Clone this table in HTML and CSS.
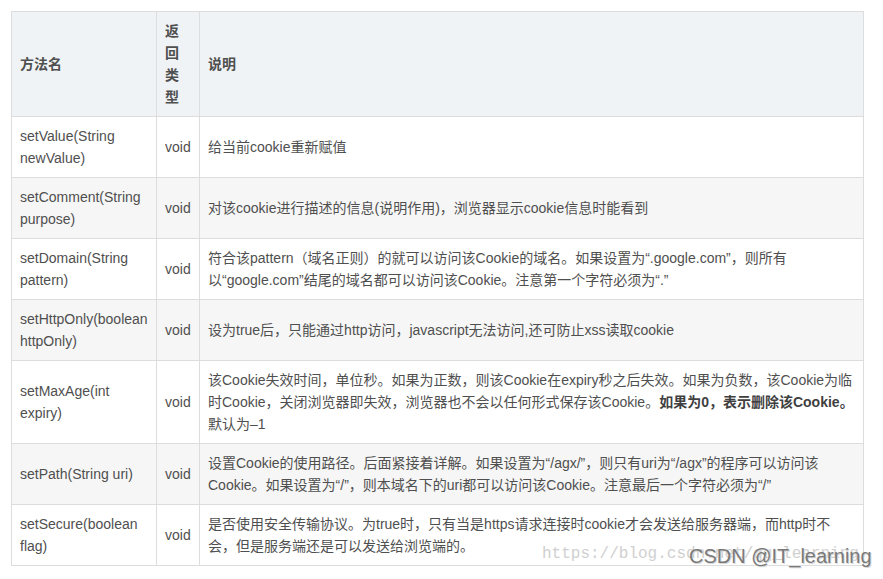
FILE: index.html
```html
<!DOCTYPE html>
<html lang="zh">
<head>
<meta charset="utf-8">
<title>Cookie 方法</title>
<link rel="stylesheet" href="styles.css">
</head>
<body>
<div class="page">
  <table class="api">
    <colgroup>
      <col class="c-name">
      <col class="c-type">
      <col class="c-desc">
    </colgroup>
    <thead>
      <tr><th>方法名</th><th>返回类型</th><th>说明</th></tr>
    </thead>
    <tbody>
      <tr><td>setValue(String newValue)</td><td>void</td><td>给当前cookie重新赋值</td></tr>
      <tr><td>setComment(String purpose)</td><td>void</td><td>对该cookie进行描述的信息(说明作用)，浏览器显示cookie信息时能看到</td></tr>
      <tr><td>setDomain(String pattern)</td><td>void</td><td>符合该pattern（域名正则）的就可以访问该Cookie的域名。如果设置为“.google.com”，则所有<span class="nb">以“google.com”结尾</span>的域名都可以访问该Cookie。注意第一个字符必须为“.”</td></tr>
      <tr><td>setHttpOnly(boolean httpOnly)</td><td>void</td><td>设为true后，只能通过http访问，javascript无法访问,还可防止xss读取cookie</td></tr>
      <tr><td>setMaxAge(int expiry)</td><td>void</td><td>该Cookie失效时间，单位秒。如果为正数，则该Cookie在expiry秒之后失效。如果为负数，该Cookie为临时Cookie，关闭浏览器即失效，浏览器也不会以任何形式保存该Cookie。<strong>如果为0，表示删除该Cookie。</strong>默认为–1</td></tr>
      <tr><td>setPath(String uri)</td><td>void</td><td>设置Cookie的使用路径。后面紧接着详解。如果设置为“/agx/”，则只有uri为“/agx”的程序可以访问该Cookie。如果设置为“/”，则本域名下的uri都可以访问该Cookie。注意最后一个字符必须为“/”</td></tr>
      <tr><td>setSecure(boolean flag)</td><td>void</td><td>是否使用安全传输协议。为true时，只有当是https请求连接时cookie才会发送给服务器端，而http时不会，但是服务端还是可以发送给浏览端的。</td></tr>
    </tbody>
  </table>
  <div class="wm-url">https://blog.csdn.net/qq_learning</div>
  <div class="wm-csdn">CSDN @IT_learning</div>
</div>
</body>
</html>
```

FILE: styles.css
```css
html, body {
  margin: 0;
  padding: 0;
  background: #ffffff;
}

.page {
  position: relative;
  padding: 11px 0 0 11px;
  width: 872px;
  height: 568px;
  overflow: hidden;
  font-family: "Liberation Sans", Arial, "Noto Sans CJK SC", sans-serif;
  font-size: 14px;
  color: #4f4f4f;
}

.api {
  border-collapse: collapse;
  table-layout: fixed;
  width: 852px;
}

.c-name { width: 145px; }
.c-type { width: 43px; }
.c-desc { width: 664px; }

.api th,
.api td {
  border: 1px solid #dddddd;
  padding: 8px;
  line-height: 22px;
  text-align: left;
  vertical-align: middle;
  word-wrap: break-word;
}

.api th {
  background: #eff3f5;
  font-weight: bold;
  color: #4f4f4f;
}

.api tbody tr:nth-child(even) td {
  background: #f6f6f6;
}

.api strong {
  font-weight: bold;
  color: #3f3f3f;
}

.nb {
  white-space: nowrap;
}

.wm-url {
  position: absolute;
  left: 542px;
  top: 545px;
  font-family: "Liberation Mono", monospace;
  font-size: 16px;
  color: #d0d0d0;
  white-space: nowrap;
}

.wm-csdn {
  position: absolute;
  left: 689px;
  top: 545px;
  font-family: "Liberation Sans", Arial, sans-serif;
  font-size: 20px;
  color: #7a7a7a;
  white-space: nowrap;
  text-shadow: 1px 1px 0 #d8d8d8;
}
```
